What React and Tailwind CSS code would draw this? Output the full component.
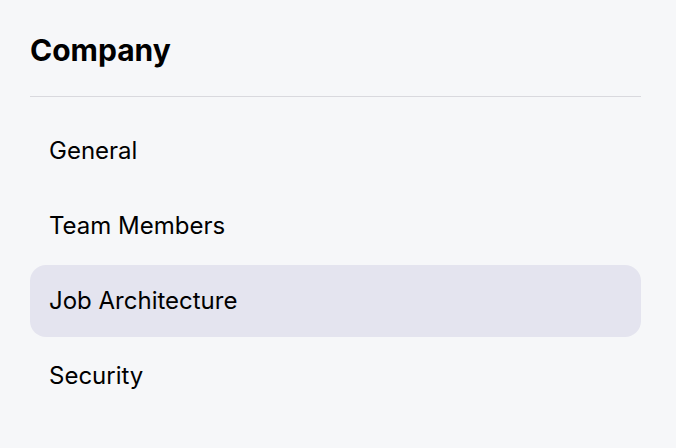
export default function App() {
  return (
    <div className="min-h-screen w-full bg-[#f6f7f9] px-[30px] pt-[30px]" style={{ fontFamily: "Inter, 'Noto Sans', sans-serif" }}>
      <div className="w-[611px]">
        <h1 className="text-[30px] font-bold leading-[40px] text-black">Company</h1>
        <div className="mt-[26px] h-px bg-[#d9d9de]" />
        <nav className="mt-[18px] flex flex-col gap-[3px]">
          {["General", "Team Members", "Job Architecture", "Security"].map((t) => (
            <div
              key={t}
              className={
                "flex h-[72px] items-center rounded-[16px] px-[19px] text-[24px] text-black " +
                (t === "Job Architecture" ? "bg-[#e4e4ef]" : "")
              }
            >
              {t}
            </div>
          ))}
        </nav>
      </div>
    </div>
  );
}
